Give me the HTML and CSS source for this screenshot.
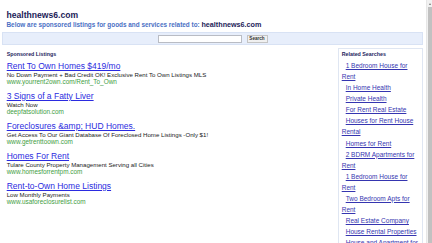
FILE: index.html
```html
<!DOCTYPE html>
<html>
<head>
<meta charset="utf-8">
<title>healthnews6.com</title>
<link rel="stylesheet" href="styles.css">
</head>
<body>
<div class="screen">
  <div class="page">
    <header class="head">
      <div class="site">healthnews6.com</div>
      <p class="intro">Below are sponsored listings for goods and services related to: <b class="domain">healthnews6.com</b></p>
    </header>
    <form class="searchbar">
      <input class="q" type="text">
      <button class="go" type="button">Search</button>
    </form>
    <div class="content">
      <section class="ads">
        <h2 class="label">Sponsored Listings</h2>
        <div class="ad">
          <a class="ad-title" href="#">Rent To Own Homes $419/mo</a>
          <div class="ad-desc">No Down Payment + Bad Credit OK! Exclusive Rent To Own Listings MLS</div>
          <div class="ad-url">www.yourrent2own.com/Rent_To_Own</div>
        </div>
        <div class="ad">
          <a class="ad-title" href="#">3 Signs of a Fatty Liver</a>
          <div class="ad-desc">Watch Now</div>
          <div class="ad-url">deepfatsolution.com</div>
        </div>
        <div class="ad">
          <a class="ad-title" href="#">Foreclosures &amp;amp; HUD Homes.</a>
          <div class="ad-desc">Get Access To Our Giant Database Of Foreclosed Home Listings -Only $1!</div>
          <div class="ad-url">www.getrenttoown.com</div>
        </div>
        <div class="ad">
          <a class="ad-title" href="#">Homes For Rent</a>
          <div class="ad-desc">Tulare County Property Management Serving all Cities</div>
          <div class="ad-url">www.homesforrentpm.com</div>
        </div>
        <div class="ad">
          <a class="ad-title" href="#">Rent-to-Own Home Listings</a>
          <div class="ad-desc">Low Monthly Payments</div>
          <div class="ad-url">www.usaforeclosurelist.com</div>
        </div>
      </section>
      <aside class="related">
        <h2 class="label">Related Searches</h2>
        <ul class="rel-list">
          <li><a href="#">1 Bedroom House for Rent</a></li>
          <li><a href="#">In Home Health</a></li>
          <li><a href="#">Private Health</a></li>
          <li><a href="#">For Rent Real Estate</a></li>
          <li><a href="#">Houses for Rent House Rental</a></li>
          <li><a href="#">Homes for Rent</a></li>
          <li><a href="#">2 BDRM Apartments for Rent</a></li>
          <li><a href="#">1 Bedroom House for Rent</a></li>
          <li><a href="#">Two Bedroom Apts for Rent</a></li>
          <li><a href="#">Real Estate Company</a></li>
          <li><a href="#">House Rental Properties</a></li>
          <li><a href="#">House and Apartment for Rent</a></li>
        </ul>
      </aside>
    </div>
  </div>
  <div class="scrollbar">
    <div class="sb-arrow"><span class="sb-tri"></span></div>
    <div class="sb-thumb"></div>
  </div>
</div>
</body>
</html>
```
FILE: styles.css
```css
html, body {
  margin: 0;
  padding: 0;
  height: 243px;
  overflow: hidden;
  background: #ffffff;
  font-family: "Liberation Sans", Arial, sans-serif;
}

.screen {
  display: flex;
  width: 432px;
  height: 243px;
}

.page {
  flex: 1;
  min-width: 0;
  padding: 0 3px 0 2px;
  overflow: hidden;
}

.head {
  padding: 10px 0 0 4.5px;
}

.site {
  margin: 0;
  font-size: 8.6px;
  line-height: 10px;
  font-weight: bold;
  color: #1c1c58;
  white-space: nowrap;
}

.intro {
  margin: 0;
  font-size: 6.4px;
  line-height: 9px;
  font-weight: bold;
  color: #4a6fc4;
  white-space: nowrap;
}

.domain {
  font-size: 7.2px;
  color: #1c1c58;
}

.searchbar {
  margin: 3px 0 0;
  height: 13px;
  box-sizing: border-box;
  background: #e7eefb;
  border: 1px solid #d8e2f4;
  display: flex;
  align-items: center;
  justify-content: center;
  gap: 5px;
}

.q {
  width: 84px;
  height: 8px;
  box-sizing: border-box;
  margin: 0;
  padding: 0;
  border: 1px solid #b9bcc4;
  background: #fff;
}

.go {
  width: 21px;
  height: 8px;
  box-sizing: border-box;
  margin: 0;
  padding: 0;
  border: 1px solid #c4c4c4;
  background: #f0f0f0;
  font-family: "Liberation Sans", Arial, sans-serif;
  font-size: 4.6px;
  font-weight: bold;
  color: #333;
  line-height: 6px;
}

.content {
  display: flex;
  align-items: flex-start;
  gap: 10px;
  margin-top: 3.3px;
}

.ads {
  flex: 1;
  min-width: 0;
  padding: 3.2px 0 0 4.7px;
}

.label {
  margin: 0;
  font-size: 5.3px;
  line-height: 7px;
  font-weight: bold;
  color: #24245e;
}

.ads .label {
  margin-bottom: 2.2px;
}

.ad {
  margin-bottom: 6px;
}

.ad-title {
  display: block;
  font-size: 8.5px;
  line-height: 10px;
  color: #2b2be0;
  text-decoration: underline;
  white-space: nowrap;
}

.ad-desc {
  font-size: 6.1px;
  line-height: 7px;
  color: #222;
  white-space: nowrap;
}

.ad-url {
  font-size: 6.4px;
  line-height: 7px;
  color: #3f9e3f;
  white-space: nowrap;
}

.related {
  width: 85px;
  flex: none;
  box-sizing: border-box;
  border: 1px solid #dfe6f2;
  padding: 2.2px 3px 20px 2.7px;
}

.related .label {
  margin-bottom: 1.6px;
}

.rel-list {
  list-style: none;
  margin: 0;
  padding: 0;
}

.rel-list li {
  font-size: 6.5px;
  line-height: 11.06px;
  text-indent: 4px;
}

.rel-list a {
  color: #3535b0;
  text-decoration: underline;
}

.scrollbar {
  width: 6px;
  flex: none;
  display: flex;
  flex-direction: column;
  background: #f1f1f1;
  border-left: 1px solid #e6e6e6;
  box-sizing: border-box;
}

.sb-arrow {
  height: 7px;
  display: flex;
  align-items: center;
  justify-content: center;
}

.sb-tri {
  width: 0;
  height: 0;
  border-left: 1.5px solid transparent;
  border-right: 1.5px solid transparent;
  border-bottom: 2px solid #777;
}

.sb-thumb {
  flex: 1;
  background: #c1c1c1;
  margin: 0 0.5px;
}
```
